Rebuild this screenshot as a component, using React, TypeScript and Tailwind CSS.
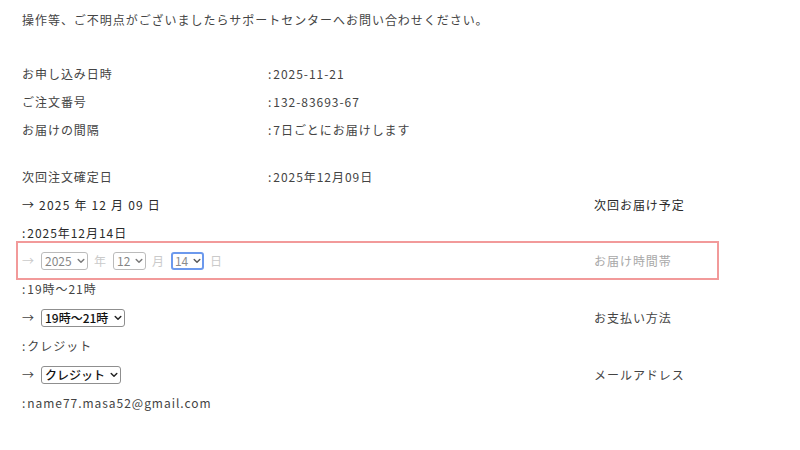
import { ReactNode } from "react";

const font = { fontFamily: '"Noto Sans CJK JP", "Noto Sans", sans-serif' };

function Chevron({ className = "" }: { className?: string }) {
  return (
    <svg viewBox="0 0 10 10" className={`w-[8px] h-[8px] ${className}`} fill="none">
      <path d="M1.5 3.2 L5 6.7 L8.5 3.2" stroke="currentColor" strokeWidth="1.8" strokeLinecap="round" strokeLinejoin="round" />
    </svg>
  );
}

function Select({
  value,
  options,
  width,
  focused = false,
  bold = false,
  className = "",
}: {
  value: string;
  options: string[];
  width: string;
  focused?: boolean;
  bold?: boolean;
  className?: string;
}) {
  return (
    <span className={`relative inline-flex items-center h-[18px] ${width} ${className}`}>
      <select
        defaultValue={value}
        className={`appearance-none w-full h-full rounded-[3px] bg-white pr-[12px] text-[12px] leading-none tracking-normal outline-none ${
          focused ? "border-2 border-[#3b78e7] pl-[2px] text-[#666]" : "border border-[#8f8f8f] pl-[3px]"
        } ${bold ? "font-medium text-[#111]" : focused ? "" : "text-[#333]"}`}
        style={font}
      >
        {options.map((o) => (
          <option key={o}>{o}</option>
        ))}
      </select>
      <Chevron className="absolute right-[3px] text-[#222] pointer-events-none" />
    </span>
  );
}

function Value({ children }: { children: ReactNode }) {
  return (
    <span>
      :<span className="ml-[1px]">{children}</span>
    </span>
  );
}

function InfoRow({ label, value }: { label: string; value: string }) {
  return (
    <div className="grid grid-cols-[246px_1fr] h-[28px] items-center">
      <span>{label}</span>
      <Value>{value}</Value>
    </div>
  );
}

function Row({ children, aside, className = "" }: { children: ReactNode; aside?: string; className?: string }) {
  return (
    <div className={`grid grid-cols-[572px_1fr] h-[28px] items-center ${className}`}>
      <div className="flex items-center">{children}</div>
      <span>{aside}</span>
    </div>
  );
}

export default function App() {
  return (
    <div
      className="w-[800px] h-[450px] bg-white pl-[22px] pt-[6px] text-[12px] tracking-[0.08em] text-[#444]"
      style={font}
    >
      <p className="h-[28px] flex items-center">操作等、ご不明点がございましたらサポートセンターへお問い合わせください。</p>

      <div className="mt-[26px]">
        <InfoRow label="お申し込み日時" value="2025-11-21" />
        <InfoRow label="ご注文番号" value="132-83693-67" />
        <InfoRow label="お届けの間隔" value="7日ごとにお届けします" />
      </div>

      <div className="mt-[19px] w-[697px]">
        <InfoRow label="次回注文確定日" value="2025年12月09日" />
        <Row aside="次回お届け予定" className="text-[#2a2a2a]">
          <span className="tracking-[0.1em]">→ 2025 年 12 月 09 日</span>
        </Row>
        <Row className="text-[#2a2a2a]">
          <Value>2025年12月14日</Value>
        </Row>
        <div className="relative">
          <span className="absolute -top-[6px] -bottom-[5px] -left-[6px] right-0 border-2 border-[#f29a9a] pointer-events-none" />
          <Row aside="お届け時間帯" className="text-[#a8a8a8]">
            <span className="w-[19px] opacity-60">→</span>
            <Select value="2025" options={["2025", "2026"]} width="w-[47px]" className="opacity-60" />
            <span className="mx-[6px] opacity-60">年</span>
            <Select value="12" options={["11", "12"]} width="w-[33px]" className="opacity-60" />
            <span className="mx-[6px] opacity-60">月</span>
            <Select value="14" options={["13", "14", "15"]} width="w-[33px]" focused className="opacity-75" />
            <span className="mx-[6px] opacity-60">日</span>
          </Row>
        </div>
        <Row>
          <Value>19時～21時</Value>
        </Row>
        <Row aside="お支払い方法" className="h-[29px]">
          <span className="w-[19px]">→</span>
          <Select value="19時～21時" options={["19時～21時", "8時～12時"]} width="w-[84px]" bold />
        </Row>
        <Row>
          <Value>クレジット</Value>
        </Row>
        <Row aside="メールアドレス" className="h-[29px]">
          <span className="w-[19px]">→</span>
          <Select value="クレジット" options={["クレジット", "代金引換"]} width="w-[80px]" bold />
        </Row>
        <Row>
          <Value>name77.masa52@gmail.com</Value>
        </Row>
      </div>
    </div>
  );
}
